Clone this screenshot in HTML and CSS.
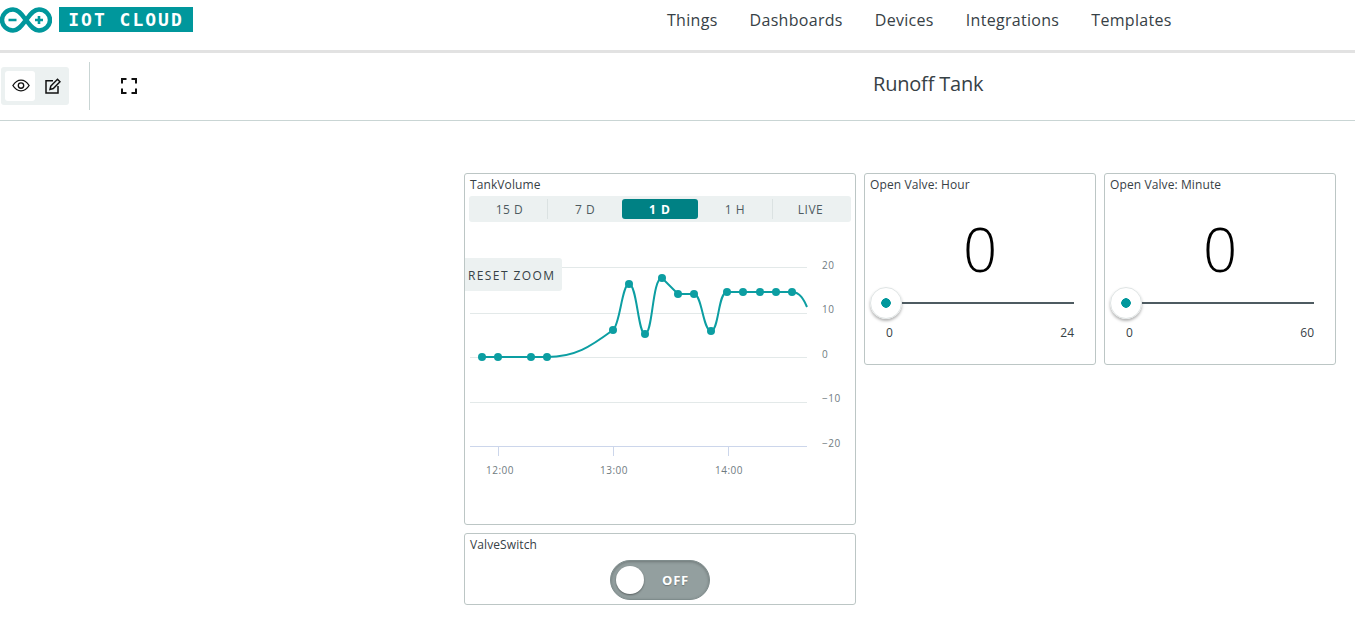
FILE: index.html
```html
<!DOCTYPE html>
<html lang="en">
<head>
    <meta charset="UTF-8">
    <title>Runoff Tank</title>
    <link rel="stylesheet" href="styles.css">
</head>
<body>
    <header class="topbar">
        <div class="brand">
            <svg class="logo" width="52" height="26" viewBox="0 0 52 26">
                <path d="M13 2.500C19 2.500 22 8 26 13C30 18 33 23.500 39 23.500C45 23.500 50 18.800 50 13C50 7.200 45 2.500 39 2.500C33 2.500 30 8 26 13C22 18 19 23.500 13 23.500C7 23.500 2 18.800 2 13C2 7.200 7 2.500 13 2.500Z" fill="none" stroke="#00979c" stroke-width="4.500"/>
                <path d="M8.500 11.700H16.500V14.300H8.500ZM35 11.700H37.700V9H40.300V11.700H43V14.300H40.300V17H37.700V14.300H35Z" fill="#00979c"/>
            </svg>
            <span class="brand-tag">IOT CLOUD</span>
        </div>
        <nav class="nav">
            <a>Things</a>
            <a>Dashboards</a>
            <a>Devices</a>
            <a>Integrations</a>
            <a>Templates</a>
        </nav>
    </header>

    <section class="toolbar">
        <div class="mode">
            <span class="mode-btn active">
                <svg width="18" height="13" viewBox="0 0 20 14" fill="none" stroke="#111" stroke-width="1.500">
                    <path d="M1 7C3.500 3 6.500 1 10 1C13.500 1 16.500 3 19 7C16.500 11 13.500 13 10 13C6.500 13 3.500 11 1 7Z"/>
                    <circle cx="10" cy="7" r="3"/>
                </svg>
            </span>
            <span class="mode-btn edit">
                <svg width="16" height="16" viewBox="0 0 16 16" fill="none" stroke="#111" stroke-width="1.500">
                    <path d="M8 2.800H1V15H13V8"/>
                    <path d="M5 11.500L5.800 8L12.500 1.200L15 3.700L8.300 10.500Z"/>
                </svg>
            </span>
        </div>
        <div class="divider"></div>
        <svg class="fullscreen" width="16" height="16" viewBox="0 0 16 16" fill="none" stroke="#111" stroke-width="2">
            <path d="M1 5.500V1H5.500M10.500 1H15V5.500M15 10.500V15H10.500M5.500 15H1V10.500"/>
        </svg>
        <h1 class="title">Runoff Tank</h1>
    </section>

    <main class="board">
        <div class="col-chart">
            <div class="card chart-card">
                <div class="card-title">TankVolume</div>
                <div class="tabs">
                    <span class="tab sep first">15 D</span>
                    <span class="tab">7 D</span>
                    <span class="tab selected">1 D</span>
                    <span class="tab sep">1 H</span>
                    <span class="tab last">LIVE</span>
                </div>
                <div class="chart">
                    <svg width="390" height="300" viewBox="465 224 390 300">
                        <g stroke="#e3e9e9">
                            <path d="M470 267.500H807M470 313.500H807M470 357.500H807M470 402.500H807"/>
                        </g>
                        <path d="M470 446.500H807M498.500 447V456M613.500 447V456M728.500 447V456" stroke="#ccd6eb"/>
                        <path d="M482 357H547C575 357 590 347 613 330C620 325 622 284 629 284C637 284 638 334 645 334C653 334 652 278 662 278L678 294H694C702 294 703 331 711 331C719 331 718 292 727 292H792C800 292 804 300 807 307" fill="none" stroke="#0c9ea2" stroke-width="2"/>
                        <g fill="#0c9ea2">
                            <circle cx="482" cy="357" r="4"/><circle cx="498" cy="357" r="4"/>
                            <circle cx="531" cy="357" r="4"/><circle cx="547" cy="357" r="4"/>
                            <circle cx="613" cy="330" r="4"/><circle cx="629" cy="284" r="4"/>
                            <circle cx="645" cy="334" r="4"/><circle cx="662" cy="278" r="4"/>
                            <circle cx="678" cy="294" r="4"/><circle cx="694" cy="294" r="4"/>
                            <circle cx="711" cy="331" r="4"/><circle cx="727" cy="292" r="4"/>
                            <circle cx="743" cy="292" r="4"/><circle cx="760" cy="292" r="4"/>
                            <circle cx="776" cy="292" r="4"/><circle cx="792" cy="292" r="4"/>
                        </g>
                        <g class="axis">
                            <text x="822" y="269">20</text>
                            <text x="822" y="313">10</text>
                            <text x="822" y="358">0</text>
                            <text x="822" y="402">−10</text>
                            <text x="822" y="447">−20</text>
                            <text x="486" y="474">12:00</text>
                            <text x="600" y="474">13:00</text>
                            <text x="715" y="474">14:00</text>
                        </g>
                    </svg>
                    <span class="reset-zoom">RESET ZOOM</span>
                </div>
            </div>
            <div class="card switch-card">
                <div class="card-title">ValveSwitch</div>
                <div class="switch">
                    <span class="knob"></span>
                    <span class="switch-label">OFF</span>
                </div>
            </div>
        </div>

        <div class="card slider-card">
            <div class="card-title">Open Valve: Hour</div>
            <div class="value">0</div>
            <div class="slider"><span class="thumb"></span><span class="track"></span></div>
            <div class="range"><span>0</span><span>24</span></div>
        </div>

        <div class="card slider-card">
            <div class="card-title">Open Valve: Minute</div>
            <div class="value">0</div>
            <div class="slider"><span class="thumb"></span><span class="track"></span></div>
            <div class="range"><span>0</span><span>60</span></div>
        </div>
    </main>
</body>
</html>
```

FILE: styles.css
```css
* {
    box-sizing: border-box;
}
body {
    margin: 0;
    font-family: 'Open Sans', sans-serif;
    color: #374146;
    background: #ffffff;
    overflow: hidden;
}
.topbar {
    height: 53px;
    border-bottom: 3px solid #e2e2e2;
    display: flex;
    padding-top: 7px;
}
.brand {
    display: flex;
    align-items: flex-start;
    width: 667px;
}
.logo {
    width: 52px;
    height: 26px;
}
.brand-tag {
    margin-left: 7px;
    width: 134px;
    height: 25px;
    background: #00979c;
    color: #ffffff;
    font-family: 'DejaVu Sans Mono', monospace;
    font-weight: bold;
    font-size: 18px;
    line-height: 26px;
    letter-spacing: 2px;
    text-align: center;
    white-space: pre;
}
.nav {
    display: flex;
    gap: 32px;
    font-size: 16px;
    line-height: 26px;
    letter-spacing: 0.3px;
}
.toolbar {
    height: 68px;
    border-bottom: 1px solid #c9d5d4;
    display: flex;
    align-items: center;
    position: relative;
    padding: 0 0 2px 1px;
}
.mode {
    width: 68px;
    height: 38px;
    background: #ecf1f1;
    border-radius: 3px;
    padding: 4px;
    display: flex;
}
.mode-btn {
    width: 30px;
    height: 30px;
    border-radius: 3px;
    display: flex;
    align-items: center;
    justify-content: center;
}
.mode-btn.active {
    background: #ffffff;
    padding-left: 2px;
}
.mode-btn.edit {
    padding-left: 5px;
}
.divider {
    width: 1px;
    height: 48px;
    background: #c9d5d4;
    margin-left: 20px;
}
.fullscreen {
    margin-left: 31px;
}
.title {
    position: absolute;
    left: 873px;
    top: 17px;
    margin: 0;
    font-size: 20px;
    font-weight: 400;
    line-height: 28px;
    letter-spacing: -0.2px;
}
.board {
    display: flex;
    align-items: flex-start;
    gap: 8px;
    padding: 52px 0 0 464px;
}
.col-chart {
    display: flex;
    flex-direction: column;
    gap: 8px;
}
.card {
    border: 1px solid #bcc6c5;
    border-radius: 3px;
    background: #ffffff;
    padding: 3px 5px;
}
.card-title {
    font-size: 12px;
    line-height: 16px;
    letter-spacing: 0.1px;
    color: #374146;
}
.chart-card {
    width: 392px;
    height: 352px;
}
.tabs {
    display: grid;
    grid-template-columns: 79px 74px 76px 75px 78px;
    align-items: center;
    height: 26px;
    margin: 3px 0 0 -1px;
    width: 382px;
    background: #ecf1f1;
    border-radius: 3px;
    padding: 3px 0;
}
.tab {
    height: 20px;
    font-size: 12px;
    line-height: 22px;
    text-align: center;
    letter-spacing: 0.5px;
    color: #4e5b61;
}
.tab.first {
    padding-left: 3px;
}
.tab.last {
    padding-right: 3px;
}
.tab.sep {
    border-right: 1px solid #dbe2e2;
}
.tab.selected {
    background: #008184;
    color: #ffffff;
    font-weight: bold;
    letter-spacing: 1px;
    border-radius: 3px;
}
.chart {
    position: relative;
    margin-left: -5px;
    height: 300px;
    margin-top: 2px;
}
.chart svg {
    display: block;
}
.axis {
    font-size: 10px;
    letter-spacing: 0.5px;
    fill: #6f7b7f;
}
.reset-zoom {
    position: absolute;
    left: 0;
    top: 34px;
    width: 97px;
    height: 33px;
    background: #ecf1f1;
    border-radius: 0 3px 3px 0;
    padding-left: 3px;
    font-size: 12px;
    line-height: 35px;
    letter-spacing: 1.4px;
    color: #374146;
    white-space: nowrap;
}
.switch-card {
    width: 392px;
    height: 72px;
}
.switch {
    width: 100px;
    height: 40px;
    margin: 7px auto 0;
    background: #939f9f;
    border: 1px solid #7f8c8c;
    border-radius: 20px;
    display: flex;
    align-items: center;
    padding-left: 5px;
    box-shadow: inset 0 1px 3px rgba(0, 0, 0, 0.25);
}
.knob {
    width: 28px;
    height: 28px;
    border-radius: 50%;
    background: #ffffff;
    box-shadow: 0 1px 2px rgba(0, 0, 0, 0.4);
}
.switch-label {
    margin-left: 18px;
    font-size: 13px;
    font-weight: bold;
    letter-spacing: 0.8px;
    color: #ffffff;
    text-shadow: 0 1px 1px rgba(0, 0, 0, 0.25);
}
.slider-card {
    width: 232px;
    height: 192px;
}
.value {
    font-size: 60px;
    font-weight: 300;
    line-height: 76px;
    text-align: center;
    color: #000000;
    margin-top: 18px;
}
.slider {
    display: flex;
    align-items: center;
    margin-top: -1px;
    height: 34px;
}
.thumb {
    width: 32px;
    height: 32px;
    border-radius: 50%;
    background: radial-gradient(circle, #00979c 0 4.500px, #ffffff 5px);
    border: 1px solid #dfe4e4;
    box-shadow: 0 2px 3px rgba(0, 0, 0, 0.3);
    flex: none;
}
.track {
    width: 172px;
    height: 2px;
    background: #4e5b61;
}
.range {
    display: flex;
    justify-content: space-between;
    width: 204px;
    margin-top: 5px;
    padding-left: 16px;
    font-size: 12px;
    line-height: 16px;
}
```
